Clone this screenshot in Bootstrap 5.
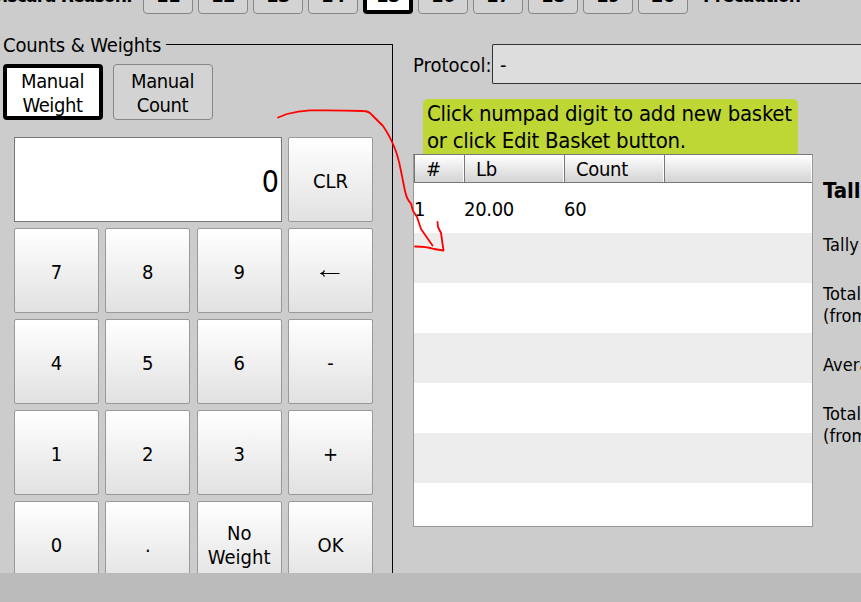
<!DOCTYPE html>
<html lang="en">
<head>
<meta charset="utf-8">
<title>Counts &amp; Weights</title>
<link rel="stylesheet" href="https://cdn.jsdelivr.net/npm/bootstrap@5.3.0/dist/css/bootstrap.min.css">
<style>
html,body{height:100%;overflow:hidden}
body{background:#bbb;color:#000;font-family:"DejaVu Sans Condensed","DejaVu Sans",sans-serif;font-stretch:condensed;font-size:20px;line-height:24px;letter-spacing:-.3px}
.station{width:861px;height:573px;background:#ccc}
.reasons{height:14px;gap:5px}
.reasons-label{width:148px;margin-left:-12px;margin-right:2px;font-weight:700;font-size:19px;line-height:24px;padding-bottom:7px;letter-spacing:-.85px}
.reasons-title{font-weight:700;font-size:19px;line-height:24px;padding-bottom:7px;margin-left:10px;letter-spacing:-.7px}
.reason{width:50px;height:50px;flex:none;background:#d3d3d3;border:1px solid #868686;border-radius:4px;color:#000;font:inherit;font-weight:700;line-height:24px;padding:12px 0 0;letter-spacing:-.4px}
.reason.active,.mode.active{background:#fff;border:4px solid #000;color:#000}
.left{width:393px;height:559px}
.group-frame{margin-top:30px;width:393px;height:529px;border-top:1px solid #000;border-right:1px solid #000}
.group-title{margin-top:-12px;height:24px;width:166px;padding-left:3px;background:#ccc;letter-spacing:-.12px}
.modes{padding:7px 0 0 3px;gap:10px}
.mode{width:100px;height:56px;border:1px solid #868686;border-radius:4px;background:#d3d3d3;color:#000;font:inherit;line-height:24px;padding:1px 1px 0 0;letter-spacing:-.4px}
.keypad{width:359px;margin:17px 0 0 14px;grid-template-columns:repeat(4,85px);grid-auto-rows:85px;row-gap:6px;justify-content:space-between}
.readout{grid-column:span 3;background:#fff;border:1px solid #777;font-size:30px;padding:4px 2px 0 0}
.key{background:linear-gradient(#fff,#e1e1e1);border:1px solid #999;border-radius:2px;color:#000;font:inherit;line-height:24px;padding:2px 0 0}
.right{padding-left:20px;width:468px}
.protocol{height:40px;margin-top:30px}
.protocol-label{width:79px;padding-top:1px;letter-spacing:0}
.protocol-value{background:#ddd;border:1px solid #333;border-right:0;border-radius:2px 0 0 2px;padding:2px 0 0 7px}
.hint{width:375px;height:55px;margin:15px 0 0 10px;padding:1px 4px 0;background:#bed735;border-radius:5px 5px 0 0;font-size:22px;line-height:27px;white-space:nowrap;letter-spacing:-.26px}
.baskets{width:400px;height:373px;border:1px solid #999;border-top-color:#777;background:#fff;overflow:hidden}
.baskets-head{height:28px;background:linear-gradient(#fff,#d3d3d3);border-bottom:1px solid #777}
.baskets-head>div{border-left:1px solid #777;padding:2px 0 0 11px;box-shadow:inset -1px 0 #fff}
.c1{width:50px}.c2,.c3{width:100px}
.basket{height:50px;padding-top:1px}
.basket:nth-child(odd){background:#ededed}
.tally{padding:46px 0 0 10px;font-size:18px;line-height:22px;white-space:nowrap;letter-spacing:.1px}
.tally h2{font-size:22px;font-weight:700;line-height:26px;margin:0 0 30px;letter-spacing:0}
.tally p{margin:0 0 27px}
.note-arrow{left:0;top:0;pointer-events:none}
</style>
<script src="https://cdn.jsdelivr.net/npm/bootstrap@5.3.0/dist/js/bootstrap.bundle.min.js"></script>
</head>
<body>
<main class="station overflow-hidden">
  <div class="reasons d-flex align-items-end overflow-hidden text-nowrap">
    <div class="reasons-label flex-shrink-0 text-end pe-1">Discard Reason:</div>
    <button class="reason">11</button><button class="reason">12</button><button class="reason">13</button><button class="reason">14</button><button class="reason active">15</button><button class="reason">16</button><button class="reason">17</button><button class="reason">18</button><button class="reason">19</button><button class="reason">20</button>
    <div class="reasons-title">Precaution</div>
  </div>
  <div class="d-flex">
    <section class="left flex-shrink-0">
      <div class="group-frame">
        <div class="group-title text-nowrap">Counts &amp; Weights</div>
        <div class="modes d-flex">
          <button class="mode active">Manual<br>Weight</button>
          <button class="mode">Manual<br>Count</button>
        </div>
        <div class="keypad d-grid">
          <div class="readout d-flex align-items-center justify-content-end">0</div>
          <button class="key">CLR</button>
          <button class="key">7</button><button class="key">8</button><button class="key">9</button>
          <button class="key" aria-label="Backspace"><svg width="20" height="10" viewBox="0 0 20 10" fill="none" stroke="#000" stroke-width="1.2"><path d="M1 5.500H19.500M4.500 2.500Q4 4.500 1 5.500Q4 6.500 4.500 8.500"/></svg></button>
          <button class="key">4</button><button class="key">5</button><button class="key">6</button><button class="key">-</button>
          <button class="key">1</button><button class="key">2</button><button class="key">3</button><button class="key">+</button>
          <button class="key">0</button><button class="key">.</button><button class="key">No<br>Weight</button><button class="key">OK</button>
        </div>
      </div>
    </section>
    <section class="right flex-shrink-0">
      <div class="protocol d-flex align-items-center">
        <div class="protocol-label text-nowrap">Protocol:</div>
        <div class="protocol-value flex-fill h-100 d-flex align-items-center">-</div>
      </div>
      <div class="d-flex">
        <div class="flex-shrink-0">
          <div class="hint">Click numpad digit to add new basket<br>or click Edit Basket button.</div>
          <div class="baskets">
            <div class="baskets-head d-flex"><div class="c1">#</div><div class="c2">Lb</div><div class="c3">Count</div><div class="flex-fill"></div></div>
            <div class="basket d-flex align-items-center"><div class="c1">1</div><div class="c2">20.00</div><div class="c3">60</div></div>
            <div class="basket"></div><div class="basket"></div><div class="basket"></div><div class="basket"></div><div class="basket"></div><div class="basket"></div>
          </div>
        </div>
        <aside class="tally mt-5 flex-shrink-0">
          <h2 class="tally-title">Tally</h2>
          <p>Tally</p>
          <p>Total<br>(from</p>
          <p>Average</p>
          <p>Total<br>(from</p>
        </aside>
      </div>
    </section>
  </div>
</main>
<svg class="note-arrow position-absolute" width="861" height="602" viewBox="0 0 861 602" fill="none" stroke="#f00" stroke-width="1.8" stroke-linecap="round" stroke-linejoin="round"><path d="M278 117.500L287 114Q298 111 310 110.400Q338 110 363 111Q369 111 372 115L383 126Q388 133 393 144Q398 155 401 171L405 191Q407 200 411 203.500L413 211L417 217L421 229L432.500 245.500M437.500 222L438 227L441 233L443.500 250.500L434 249Q427 246.500 415 246.500"/></svg>
</body>
</html>
